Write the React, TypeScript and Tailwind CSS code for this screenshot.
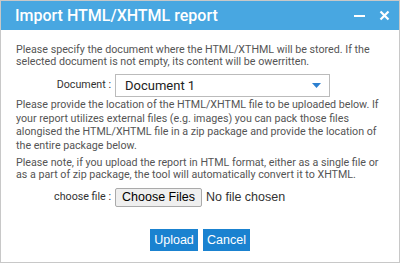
import React from 'react';

export default function App() {
  return (
    <div className="w-[400px] h-[263px] bg-white border border-[#c8c8c8] flex flex-col font-['Roboto',sans-serif] text-[10.7px] text-[#555]">
      <div className="h-[29px] bg-[#48a7e1] flex items-center pl-[14px] pr-[9px] text-white">
        <div className="flex-1 text-[16px] font-medium">Import HTML/XHTML report</div>
        <div className="w-[11px] h-[2px] bg-white mr-[14px]" />
        <svg width="11" height="11" viewBox="0 0 11 11">
          <path d="M1.5 1.5 L9.5 9.5 M9.5 1.5 L1.5 9.5" stroke="white" strokeWidth="2.2" />
        </svg>
      </div>
      <div className="flex flex-col pl-[15px] pr-[18px] pt-[14px]">
        <p className="leading-[12px]">
          Please specify the document where the HTML/XTHML will be stored. If the selected document is not empty, its content will be owerritten.
        </p>
        <div className="flex items-center mt-[6px]">
          <span className="w-[99px] text-right pr-[4px] text-[#333]">Document :</span>
          <div className="w-[215px] h-[23px] border border-[#bbb] flex items-center pl-[9px] pr-[8px]">
            <span className="flex-1 text-[13px] text-[#222]">Document 1</span>
            <svg width="9" height="5" viewBox="0 0 9 5">
              <path d="M0 0 H9 L4.5 5 Z" fill="#2b7fd0" />
            </svg>
          </div>
        </div>
        <p className="leading-[13.5px] mt-[1px]">
          Please provide the location of the HTML/XHTML file to be uploaded below. If your report utilizes external files (e.g. images) you can pack those files alongised the HTML/XHTML file in a zip package and provide the location of the entire package below.
        </p>
        <p className="leading-[12px] mt-[5px]">
          Please note, if you upload the report in HTML format, either as a single file or as a part of zip package, the tool will automatically convert it to XHTML.
        </p>
        <div className="flex items-center mt-[7px]">
          <span className="w-[99px] text-right pr-[4px] text-[#333]">choose file :</span>
          <div className="h-[19px] px-[6px] border border-[#aaa] rounded-[2px] bg-[#efefef] flex items-center font-['Liberation_Sans',sans-serif] text-[12.5px] text-black">Choose Files</div>
          <span className="ml-[4px] font-['Liberation_Sans',sans-serif] text-[12.5px] text-[#333]">No file chosen</span>
        </div>
        <div className="flex justify-center gap-[5px] mt-[22px] pl-[3px] font-['Liberation_Sans',sans-serif] text-[12.5px] text-white">
          <div className="w-[48px] h-[22px] bg-[#1a82d0] flex items-center justify-center">Upload</div>
          <div className="w-[47px] h-[22px] bg-[#1a82d0] flex items-center justify-center">Cancel</div>
        </div>
      </div>
    </div>
  );
}
